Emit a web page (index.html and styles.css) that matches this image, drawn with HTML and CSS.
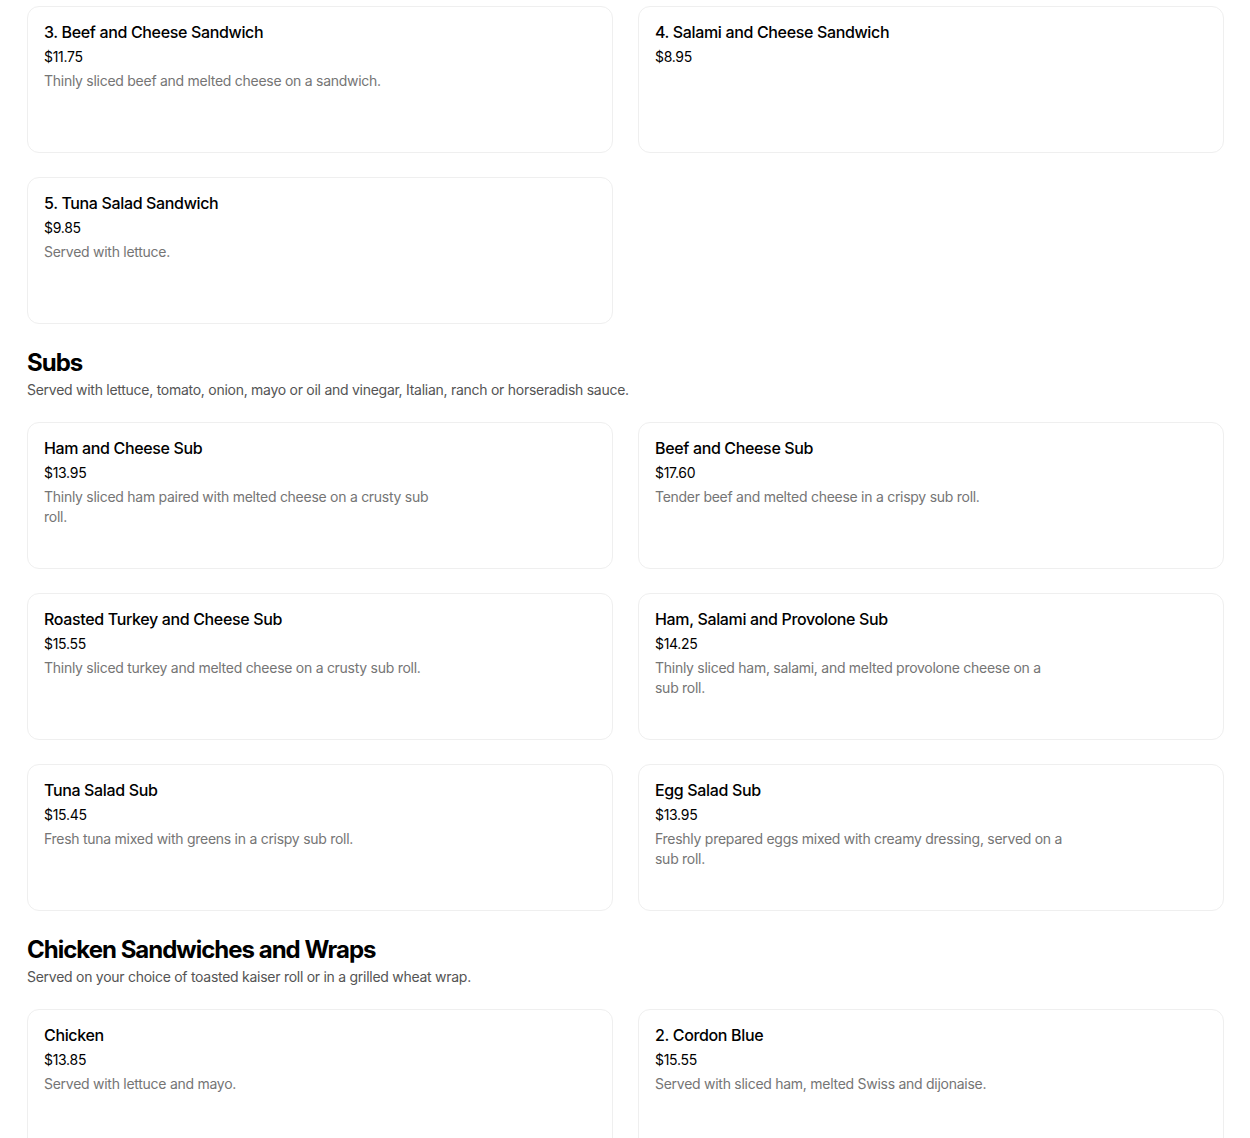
FILE: index.html
```html
<!DOCTYPE html>
<html lang="en">
<head>
    <meta charset="UTF-8">
    <meta name="viewport" content="width=device-width, initial-scale=1.0">
    <title>Menu</title>
    <link rel="stylesheet" href="styles.css">
</head>
<body>

    <div class="menu">

        <div class="item-grid first">
            <div class="item-card">
                <div class="item-title">3. Beef and Cheese Sandwich</div>
                <div class="item-price">$11.75</div>
                <div class="item-desc">Thinly sliced beef and melted cheese on a sandwich.</div>
            </div>
            <div class="item-card">
                <div class="item-title">4. Salami and Cheese Sandwich</div>
                <div class="item-price">$8.95</div>
            </div>
            <div class="item-card">
                <div class="item-title">5. Tuna Salad Sandwich</div>
                <div class="item-price">$9.85</div>
                <div class="item-desc">Served with lettuce.</div>
            </div>
        </div>

        <!-- Subs -->
        <div class="section">
            <h2 class="section-title">Subs</h2>
            <p class="section-sub">Served with lettuce, tomato, onion, mayo or oil and vinegar, Italian, ranch or horseradish sauce.</p>
            <div class="item-grid">
                <div class="item-card">
                    <div class="item-title">Ham and Cheese Sub</div>
                    <div class="item-price">$13.95</div>
                    <div class="item-desc">Thinly sliced ham paired with melted cheese on a crusty sub roll.</div>
                </div>
                <div class="item-card">
                    <div class="item-title">Beef and Cheese Sub</div>
                    <div class="item-price">$17.60</div>
                    <div class="item-desc">Tender beef and melted cheese in a crispy sub roll.</div>
                </div>
                <div class="item-card">
                    <div class="item-title">Roasted Turkey and Cheese Sub</div>
                    <div class="item-price">$15.55</div>
                    <div class="item-desc">Thinly sliced turkey and melted cheese on a crusty sub roll.</div>
                </div>
                <div class="item-card">
                    <div class="item-title">Ham, Salami and Provolone Sub</div>
                    <div class="item-price">$14.25</div>
                    <div class="item-desc">Thinly sliced ham, salami, and melted provolone cheese on a sub roll.</div>
                </div>
                <div class="item-card">
                    <div class="item-title">Tuna Salad Sub</div>
                    <div class="item-price">$15.45</div>
                    <div class="item-desc">Fresh tuna mixed with greens in a crispy sub roll.</div>
                </div>
                <div class="item-card">
                    <div class="item-title">Egg Salad Sub</div>
                    <div class="item-price">$13.95</div>
                    <div class="item-desc">Freshly prepared eggs mixed with creamy dressing, served on a sub roll.</div>
                </div>
            </div>
        </div>

        <!-- Chicken -->
        <div class="section">
            <h2 class="section-title">Chicken Sandwiches and Wraps</h2>
            <p class="section-sub">Served on your choice of toasted kaiser roll or in a grilled wheat wrap.</p>
            <div class="item-grid">
                <div class="item-card">
                    <div class="item-title">Chicken</div>
                    <div class="item-price">$13.85</div>
                    <div class="item-desc">Served with lettuce and mayo.</div>
                </div>
                <div class="item-card">
                    <div class="item-title">2. Cordon Blue</div>
                    <div class="item-price">$15.55</div>
                    <div class="item-desc">Served with sliced ham, melted Swiss and dijonaise.</div>
                </div>
            </div>
        </div>

    </div>

</body>
</html>
```

FILE: styles.css
```css
body {
    margin: 0;
    font-family: 'Inter', 'Liberation Sans', sans-serif;
    background-color: #fff;
    color: #000;
}

.menu {
    padding: 6px 26px 0 27px;
}

.item-grid {
    display: grid;
    grid-template-columns: 1fr 1fr;
    gap: 24px 25px;
}

.item-card {
    box-sizing: border-box;
    height: 147px;
    padding: 15px 16px 0 16px;
    border: 1px solid #efefef;
    border-radius: 12px;
}

.item-title {
    font-size: 16px;
    line-height: 20px;
    font-weight: 500;
    letter-spacing: -0.35px;
}

.item-price {
    margin-top: 5px;
    font-size: 14px;
    line-height: 20px;
    letter-spacing: -0.3px;
}

.item-desc {
    margin-top: 4px;
    max-width: 410px;
    font-size: 14px;
    line-height: 20px;
    letter-spacing: -0.27px;
    color: #757575;
}

.section {
    margin-top: 23px;
}

.section-title {
    margin: 0;
    font-size: 24px;
    line-height: 32px;
    font-weight: 700;
    letter-spacing: -1px;
}

.section-sub {
    margin: 1px 0 22px 0;
    font-size: 14px;
    line-height: 20px;
    letter-spacing: -0.27px;
    color: #545454;
}
```
